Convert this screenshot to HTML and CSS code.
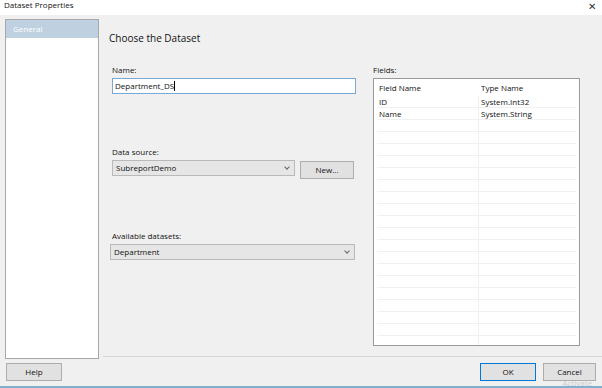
FILE: index.html
```html
<!DOCTYPE html>
<html lang="en">
<head>
    <meta charset="UTF-8">
    <title>Dataset Properties</title>
    <link rel="stylesheet" href="styles.css">
</head>
<body>
    <div class="window">
        <div class="titlebar">
            <span class="titlebar__text">Dataset Properties</span>
            <span class="titlebar__close">&#x2715;</span>
        </div>
        <div class="main">
            <div class="nav">
                <div class="nav__item nav__item--active">General</div>
            </div>
            <div class="content">
                <h1 class="content__title">Choose the Dataset</h1>
                <div class="columns">
                    <div class="form">
                        <label class="label">Name:</label>
                        <div class="input">Department_DS<span class="caret"></span></div>

                        <label class="label label--source">Data source:</label>
                        <div class="row">
                            <div class="select select--short">SubreportDemo<span class="select__arrow"></span></div>
                            <div class="button button--new">New...</div>
                        </div>

                        <label class="label label--datasets">Available datasets:</label>
                        <div class="select select--wide">Department<span class="select__arrow"></span></div>
                    </div>
                    <div class="fields">
                        <label class="label">Fields:</label>
                        <div class="grid" id="grid">
                            <div class="grid__row grid__row--head"><span>Field Name</span><span>Type Name</span></div>
                            <div class="grid__row"><span>ID</span><span>System.Int32</span></div>
                            <div class="grid__row"><span>Name</span><span>System.String</span></div>
                        </div>
                    </div>
                </div>
            </div>
        </div>
        <div class="footer">
            <div class="button button--help">Help</div>
            <div class="footer__right">
                <div class="button button--ok">OK</div>
                <div class="button">Cancel</div>
            </div>
            <span class="watermark">Activate</span>
        </div>
    </div>
    <script>
        var grid = document.getElementById('grid');
        for (var i = 0; i < 19; i++) {
            var row = document.createElement('div');
            row.className = 'grid__row';
            row.innerHTML = '<span></span><span></span>';
            grid.appendChild(row);
        }
    </script>
</body>
</html>
```

FILE: styles.css
```css
:root {
    --bg: #f0f0f0;
    --btnBorder: #adadad;
}
html,
body {
    margin: 0;
    height: 100%;
}
body {
    background: var(--bg);
    font-family: "Open Sans", "Noto Sans", sans-serif;
    font-size: 8px;
    color: #111;
}
.window {
    position: relative;
    display: flex;
    flex-direction: column;
    height: 388px;
    box-sizing: border-box;
    border-bottom: 2px solid #7fb1cf;
}
.titlebar {
    display: flex;
    justify-content: space-between;
    align-items: center;
    height: 15px;
    padding: 0 6px 0 4px;
    background: #fff;
}
.titlebar__text {
    font-size: 8px;
    line-height: 10px;
    margin-top: -5px;
}
.titlebar__close {
    font-size: 10px;
    color: #333;
    margin-top: -4px;
}
.main {
    display: flex;
    height: 344px;
}
.nav {
    width: 94px;
    margin: 4px 0 0 5px;
    background: #fff;
    border: 1px solid #a8a8a8;
    box-sizing: border-box;
    height: 340px;
}
.nav__item {
    height: 18px;
    line-height: 17px;
    padding-left: 7px;
    color: #fff;
}
.nav__item--active {
    background: #bfd1e1;
}
.content {
    flex: 1;
    margin-left: 4px;
    height: 342px;
    border-bottom: 1px solid #d6d6d6;
    box-sizing: border-box;
}
.content__title {
    margin: 16px 0 0 6px;
    font-size: 10px;
    font-weight: normal;
    line-height: 14px;
}
.columns {
    display: flex;
    margin-top: 19px;
}
.form {
    display: flex;
    flex-direction: column;
    width: 244px;
    margin-left: 9px;
}
.label {
    display: block;
    line-height: 12px;
    height: 14px;
}
.label--source {
    margin-top: 52px;
}
.label--datasets {
    margin-top: 51px;
}
.input {
    height: 16px;
    box-sizing: border-box;
    border: 1px solid #7aa9d3;
    background: #fff;
    line-height: 14px;
    padding-left: 2px;
}
.caret {
    display: inline-block;
    width: 1px;
    height: 10px;
    background: #000;
    vertical-align: -2px;
}
.row {
    display: flex;
    gap: 5px;
}
.select {
    position: relative;
    height: 16px;
    box-sizing: border-box;
    border: 1px solid #b9b9b9;
    background: #e6e6e6;
    line-height: 14px;
    padding-left: 3px;
}
.select--short {
    width: 183px;
}
.select--wide {
    width: 245px;
    margin-left: -2px;
}
.select__arrow {
    position: absolute;
    right: 5px;
    top: 4px;
    width: 3px;
    height: 3px;
    border-right: 1px solid #666;
    border-bottom: 1px solid #666;
    transform: rotate(45deg);
}
.button {
    box-sizing: border-box;
    width: 53px;
    height: 18px;
    border: 1px solid var(--btnBorder);
    background: #e1e1e1;
    text-align: center;
    line-height: 16px;
}
.button--new {
    margin-top: 1px;
    width: 54px;
}
.fields {
    margin-left: 17px;
    width: 207px;
}
.grid {
    height: 268px;
    box-sizing: border-box;
    border: 1px solid #9a9a9a;
    background: #fff;
    padding: 2px 3px 0;
    overflow: hidden;
}
.grid__row {
    display: flex;
    height: 12px;
    line-height: 11px;
    border-bottom: 1px solid #f0f0f0;
    box-sizing: border-box;
}
.grid__row span {
    padding-left: 2px;
}
.grid__row span:first-child {
    width: 99px;
    border-right: 1px solid #f0f0f0;
}
.grid__row--head {
    height: 15px;
    line-height: 14px;
}
.grid__row--head,
.grid__row--head span:first-child {
    border-color: transparent;
}
.footer {
    display: flex;
    justify-content: space-between;
    align-items: flex-start;
    flex: 1;
    padding: 4px 6px 0;
}
.button--help {
    width: 56px;
}
.footer__right {
    display: flex;
    gap: 7px;
}
.button--ok {
    width: 56px;
    border-color: #0078d7;
}
.watermark {
    position: absolute;
    right: 10px;
    bottom: 0;
    font-size: 8px;
    line-height: 6px;
    color: #c8ccd0;
}
```
